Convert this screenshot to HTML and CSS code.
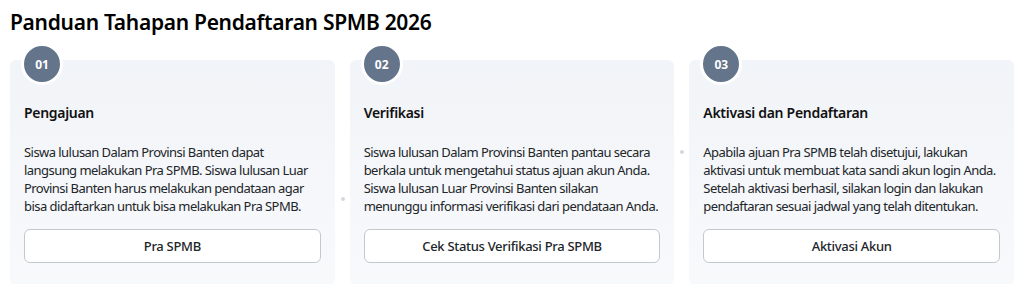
FILE: index.html
```html
<!DOCTYPE html>
<html lang="id">
<head>
    <meta charset="UTF-8">
    <meta name="viewport" content="width=device-width, initial-scale=1.0">
    <title>Panduan SPMB 2026</title>
    <link rel="stylesheet" href="styles.css">
</head>
<body>
    <h1 class="page-title">Panduan Tahapan Pendaftaran SPMB 2026</h1>
    <div class="steps">
        <div class="step dot-low">
            <span class="step-num">01</span>
            <h2>Pengajuan</h2>
            <p>Siswa lulusan Dalam Provinsi Banten dapat<br>langsung melakukan Pra SPMB. Siswa lulusan Luar Provinsi Banten harus melakukan pendataan agar bisa didaftarkan untuk bisa melakukan Pra SPMB.</p>
            <button class="step-btn">Pra SPMB</button>
        </div>
        <div class="step dot-high">
            <span class="step-num">02</span>
            <h2>Verifikasi</h2>
            <p>Siswa lulusan Dalam Provinsi Banten pantau secara berkala untuk mengetahui status ajuan akun Anda. Siswa lulusan Luar Provinsi Banten silakan menunggu informasi verifikasi dari pendataan Anda.</p>
            <button class="step-btn">Cek Status Verifikasi Pra SPMB</button>
        </div>
        <div class="step">
            <span class="step-num">03</span>
            <h2>Aktivasi dan Pendaftaran</h2>
            <p>Apabila ajuan Pra SPMB telah disetujui, lakukan aktivasi untuk membuat kata sandi akun login Anda. Setelah aktivasi berhasil, silakan login dan lakukan pendaftaran sesuai jadwal yang telah ditentukan.</p>
            <button class="step-btn">Aktivasi Akun</button>
        </div>
    </div>
</body>
</html>
```
FILE: styles.css
```css
body {
    margin: 0;
    padding: 8px 10px 0 10px;
    font-family: "Noto Sans", "Open Sans", sans-serif;
    color: #212529;
    background: #fff;
}
.page-title {
    margin: 0 0 24px 0;
    font-size: 21px;
    line-height: 28px;
    font-weight: 600;
    letter-spacing: -0.3px;
    color: #000;
}
.steps {
    display: grid;
    grid-template-columns: repeat(3, 1fr);
    gap: 15px;
}
.step {
    position: relative;
    display: flex;
    flex-direction: column;
    background: linear-gradient(#f1f4f8, #f8f9fb);
    border-radius: 6px;
    padding: 43px 14px 22px 14px;
    letter-spacing: -0.55px;
}
.step-num {
    position: absolute;
    top: -17px;
    left: 11px;
    width: 36px;
    height: 36px;
    border: 3px solid #fff;
    border-radius: 50%;
    background: #64748b;
    color: #fff;
    font-size: 12px;
    font-weight: 700;
    letter-spacing: 0;
    display: flex;
    align-items: center;
    justify-content: center;
}
.step h2 {
    margin: 0 0 20px 0;
    font-size: 14px;
    line-height: 20px;
    font-weight: 600;
    letter-spacing: -0.3px;
    color: #111;
}
.step p {
    margin: 0 0 14px 0;
    padding-right: 1.5px;
    font-size: 13px;
    line-height: 18px;
}
.step-btn {
    display: block;
    width: 100%;
    height: 34px;
    margin-top: auto;
    background: #fff;
    border: 1px solid #c4c8cc;
    border-radius: 6px;
    font-family: inherit;
    font-size: 13px;
    font-weight: 500;
    letter-spacing: -0.3px;
    color: #212529;
}
/* small connector dots between the cards */
.dot-low::after,
.dot-high::after {
    content: "";
    position: absolute;
    right: -10px;
    width: 4px;
    height: 4px;
    border-radius: 50%;
    background: #d4d7db;
}
.dot-low::after {
    top: 137px;
}
.dot-high::after {
    top: 90px;
}
```
